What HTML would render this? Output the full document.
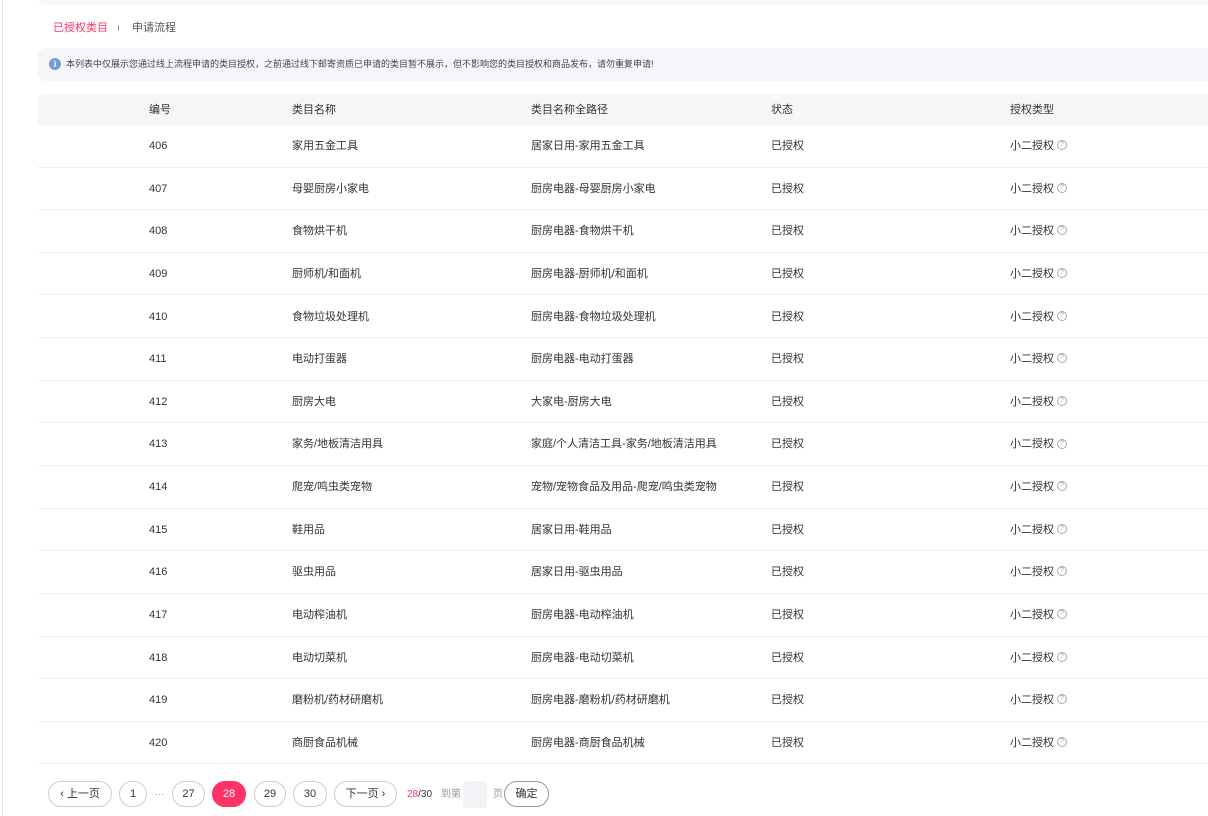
<!DOCTYPE html>
<html><head><meta charset="utf-8"><style>
*{margin:0;padding:0;box-sizing:border-box}
body{width:1208px;height:816px;overflow:hidden;background:#fff;font-family:"Liberation Sans","Noto Sans CJK SC",sans-serif;font-size:11px;color:#333;position:relative}
.a{position:absolute;white-space:nowrap;line-height:14px}
.lb{position:absolute;left:2px;top:0;width:1px;height:816px;background:#dde3ea}
.top{position:absolute;left:38px;top:-10px;width:1180px;height:15px;background:#f7f8fa;border-radius:8px}
.notice{position:absolute;left:38px;top:48px;width:1180px;height:33px;background:#f5f6fa;border-radius:8px}
.hdr{position:absolute;left:38px;top:94px;width:1180px;height:31px;background:#f5f6f8;border-radius:6px 0 0 0}
.line{position:absolute;left:38px;width:1170px;height:1px;background:#eeeff2}
.btn{position:absolute;top:781px;height:26px;border:1px solid #ccc;border-radius:13px;text-align:center;line-height:24px;font-size:11px;color:#333;background:#fff}
.q{display:inline-block;width:10px;height:10px;border:1px solid #aaa;border-radius:50%;font-size:7px;line-height:8px;text-align:center;color:#999;vertical-align:middle;margin-left:3px;margin-top:-2px}
</style></head><body>
<div class="lb"></div>
<div class="top"></div>
<div class="a" style="left:53px;top:21px;color:#ff3366">已授权类目</div>
<div class="a" style="left:118px;top:25px;width:1px;height:6px;background:#999"></div>
<div class="a" style="left:132px;top:21px;color:#555">申请流程</div>
<div class="notice"></div>
<div class="a" style="left:49px;top:58px;width:12px;height:12px;border-radius:50%;background:#7a9ad3;color:#fff;font-size:9px;line-height:12px;text-align:center;font-weight:bold">i</div>
<div class="a" style="left:66px;top:57px;font-size:9px;color:#444">本列表中仅展示您通过线上流程申请的类目授权，之前通过线下邮寄资质已申请的类目暂不展示，但不影响您的类目授权和商品发布，请勿重复申请!</div>
<div class="hdr"></div>
<div class="a" style="left:149px;top:103px">编号</div>
<div class="a" style="left:292px;top:103px">类目名称</div>
<div class="a" style="left:531px;top:103px">类目名称全路径</div>
<div class="a" style="left:771px;top:103px">状态</div>
<div class="a" style="left:1010px;top:103px">授权类型</div>
<div id="rows"></div>
<script>
var d=[["406","家用五金工具","居家日用-家用五金工具"],["407","母婴厨房小家电","厨房电器-母婴厨房小家电"],["408","食物烘干机","厨房电器-食物烘干机"],["409","厨师机/和面机","厨房电器-厨师机/和面机"],["410","食物垃圾处理机","厨房电器-食物垃圾处理机"],["411","电动打蛋器","厨房电器-电动打蛋器"],["412","厨房大电","大家电-厨房大电"],["413","家务/地板清洁用具","家庭/个人清洁工具-家务/地板清洁用具"],["414","爬宠/鸣虫类宠物","宠物/宠物食品及用品-爬宠/鸣虫类宠物"],["415","鞋用品","居家日用-鞋用品"],["416","驱虫用品","居家日用-驱虫用品"],["417","电动榨油机","厨房电器-电动榨油机"],["418","电动切菜机","厨房电器-电动切菜机"],["419","磨粉机/药材研磨机","厨房电器-磨粉机/药材研磨机"],["420","商厨食品机械","厨房电器-商厨食品机械"]];
var h="";for(var i=0;i<d.length;i++){var c=145+42.64*i,t=c-6;
h+='<div class="a" style="left:149px;top:'+t+'px">'+d[i][0]+'</div><div class="a" style="left:292px;top:'+t+'px">'+d[i][1]+'</div><div class="a" style="left:531px;top:'+t+'px">'+d[i][2]+'</div><div class="a" style="left:771px;top:'+t+'px">已授权</div><div class="a" style="left:1010px;top:'+t+'px">小二授权<span class="q">?</span></div><div class="line" style="top:'+Math.round(c+21.5)+'px"></div>';}
document.getElementById("rows").innerHTML=h;
</script>
<div class="btn" style="left:48px;width:64px">‹ 上一页</div>
<div class="btn" style="left:119px;width:28px">1</div>
<div class="a" style="left:155px;top:787px;color:#999;font-size:9px">···</div>
<div class="btn" style="left:172px;width:33px">27</div>
<div class="btn" style="left:212px;width:34px;background:#ff3366;border-color:#ff3366;color:#fff">28</div>
<div class="btn" style="left:254px;width:32px">29</div>
<div class="btn" style="left:293px;width:34px">30</div>
<div class="btn" style="left:334px;width:63px">下一页 ›</div>
<div class="a" style="left:407px;top:788px;font-size:10px"><span style="color:#ff3366">28</span>/30</div>
<div class="a" style="left:441px;top:788px;font-size:10px;color:#999">到第</div>
<div class="a" style="left:463px;top:781px;width:24px;height:27px;background:#f2f3f7;border-radius:4px"></div>
<div class="a" style="left:493px;top:788px;font-size:10px;color:#999">页</div>
<div class="btn" style="left:504px;width:45px;border-color:#999">确定</div>
</body></html>
